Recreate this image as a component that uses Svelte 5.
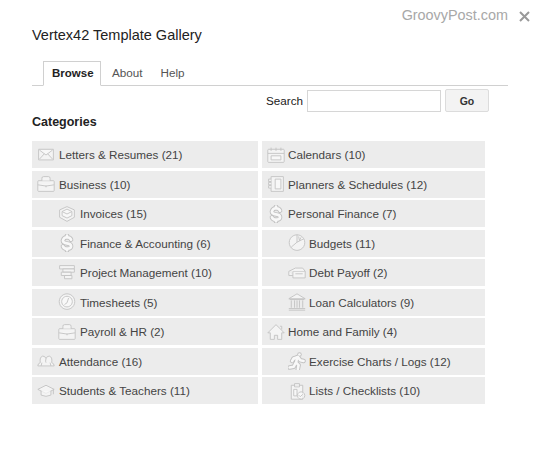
<script>
  const icons = {
    mail: ['M2 4h18v13H2z', 'M3 5l8 6 8-6', 'M3 16l6-6.500', 'M19 16l-6-6.500'],
    case: ['M1 8q0-1 1-1h18q1 0 1 1v11q0 1-1 1H2q-1 0-1-1z', 'M6 7V4q0-2 2-2h6q2 0 2 2v3', 'M1 12q10 3 20 0', 'M11 13v2'],
    box: ['M11 2l9 4v9l-9 5-9-5V6z', 'M5 8l6-3 6 3v5l-6 3-6-3z', 'M5 8l6 3 6-3'],
    project: ['M2 2h18v4H2z', 'M6 6h14v4H6z', 'M4 10h12v4H4z', 'M8 14h9v4H8z'],
    clock: ['M11 1a9.500 9.500 0 1 0 .01 0z', 'M11 4a6.500 6.500 0 1 0 .01 0z', 'M13 6l-2 6-3 2'],
    people: ['M1 17q0-3 3-4-1-7 3-8 3 0 4 3 1-3 4-3 4 1 3 8 3 1 3 4z', 'M11 8q-1 4 0 5', 'M6 13l-1 4', 'M16 13l1 4'],
    cap: ['M1 9l10-5 10 5-10 5z', 'M5 11v5q6 3 12 0v-5', 'M20 9v6'],
    cal: ['M1 5q0-1 1-1h18q1 0 1 1v14q0 1-1 1H2q-1 0-1-1z', 'M1 9h20', 'M5 2v4', 'M11 2v4', 'M17 2v4', 'M5 12h12v5H5z'],
    planner: ['M5 2h15v18H5z', 'M5 5H2v3h3', 'M5 9H2v3h3', 'M5 13H2v3h3', 'M10 5h7v12h-7z'],
    pie: ['M11 1a9.500 9.500 0 1 0 .01 0z', 'M11 10V1', 'M11 10l8-4', 'M11 10l-7 6', 'M13 3l1 5', 'M16 4l-2 4'],
    debt: ['M6 9h15v8H6z', 'M1 9l8-4h9l3 4', 'M1 9v5h5', 'M9 12h9'],
    bank: ['M11 1l10 6H1z', 'M2 8h18', 'M4 9v9', 'M8 9v9', 'M14 9v9', 'M18 9v9', 'M11 9v9', 'M1 19h20', 'M1 21h20'],
    home: ['M11 2L1 12h3v8h5v-5h4v5h5v-8h3z', 'M16 4h2v4'],
    list: ['M4 4h14v17H4z', 'M8 2h6v4H8z', 'M7 9h4v8H7z', 'M16 12a4.500 4.500 0 1 0 .01 0z', 'M13 16l2 2 3-3']
  }

  // these two are fat outlined shapes, drawn as a wide stroke with a paler one on top
  const fat = {
    dollar: ['M16 7q-1-3-5-3T6 8q0 3 5 3.500t5 3.500q0 3-5 3-4 0-5-3', 'M11 2v2', 'M11 18v2'],
    run: ['M14 3h.01', 'M7 8l5-2 3 4 4 1', 'M11 7l-1 6 3 3-1 5', 'M9 14l-2 4-5 1', 'M7 8l-2 3']
  }

  const left = [
    { name: 'Letters & Resumes (21)', icon: 'mail' },
    { name: 'Business (10)', icon: 'case' },
    { name: 'Invoices (15)', icon: 'box', sub: true },
    { name: 'Finance & Accounting (6)', icon: 'dollar', sub: true },
    { name: 'Project Management (10)', icon: 'project', sub: true },
    { name: 'Timesheets (5)', icon: 'clock', sub: true },
    { name: 'Payroll & HR (2)', icon: 'case', sub: true },
    { name: 'Attendance (16)', icon: 'people' },
    { name: 'Students & Teachers (11)', icon: 'cap' }
  ]
  const right = [
    { name: 'Calendars (10)', icon: 'cal' },
    { name: 'Planners & Schedules (12)', icon: 'planner' },
    { name: 'Personal Finance (7)', icon: 'dollar' },
    { name: 'Budgets (11)', icon: 'pie', sub: true },
    { name: 'Debt Payoff (2)', icon: 'debt', sub: true },
    { name: 'Loan Calculators (9)', icon: 'bank', sub: true },
    { name: 'Home and Family (4)', icon: 'home' },
    { name: 'Exercise Charts / Logs (12)', icon: 'run', sub: true },
    { name: 'Lists / Checklists (10)', icon: 'list', sub: true }
  ]
  const columns = [left, right]
</script>

<div class="dialog">
  <div class="watermark">
    <span>GroovyPost.com</span>
    <svg class="close" width="11" height="11" viewBox="0 0 11 11"><path d="M1 1l9 9M10 1l-9 9" /></svg>
  </div>

  <h1>Vertex42 Template Gallery</h1>

  <nav>
    <span class="tab active">Browse</span>
    <span class="tab">About</span>
    <span class="tab">Help</span>
  </nav>

  <div class="search">
    <label for="q">Search</label>
    <input id="q" type="text" />
    <button>Go</button>
  </div>

  <h2>Categories</h2>

  <div class="grid">
    {#each columns as col, c}
      <ul class:second={c === 1}>
        {#each col as item}
          <li class:sub={item.sub}>
            <svg width="18" height="18" viewBox="0 0 22 22">
              {#if fat[item.icon]}
                {#each fat[item.icon] as d}
                  <path class="under" {d} />
                {/each}
                {#each fat[item.icon] as d}
                  <path class="over" {d} />
                {/each}
              {:else}
                {#each icons[item.icon] as d}
                  <path {d} />
                {/each}
              {/if}
            </svg>
            <span>{item.name}</span>
          </li>
        {/each}
      </ul>
    {/each}
  </div>
</div>

<style>
  :global(body) {
    background: #fff;
  }
  .dialog {
    width: 539px;
    height: 450px;
    box-sizing: border-box;
    padding: 6px 9px 0 32px;
    font-family: "Liberation Sans", Arial, sans-serif;
    color: #333;
    overflow: hidden;
  }
  .watermark {
    display: flex;
    justify-content: flex-end;
    align-items: center;
    gap: 11px;
    height: 17px;
    font-size: 14.4px;
    color: #a8a8a8;
  }
  .close {
    margin-top: 4px;
  }
  .close path {
    fill: none;
    stroke: #999;
    stroke-width: 2;
  }
  h1 {
    margin: 1px 0 0;
    height: 22px;
    font-size: 14.5px;
    line-height: 22px;
    font-weight: normal;
    color: #222;
  }
  nav {
    display: flex;
    align-items: flex-end;
    box-sizing: border-box;
    width: 476px;
    height: 24px;
    margin-top: 16px;
    padding-left: 11px;
    border-bottom: 1px solid #d0d0d0;
    font-size: 11.7px;
  }
  .tab {
    height: 23px;
    line-height: 22px;
    padding: 0 9px;
    color: #555;
  }
  .tab.active {
    box-sizing: border-box;
    width: 58px;
    height: 25px;
    margin: 0 2px -1px 0;
    padding: 0 8px;
    line-height: 23px;
    background: #fff;
    border: 1px solid #d0d0d0;
    border-bottom-color: #fff;
    font-weight: bold;
    font-size: 11.5px;
    color: #222;
  }
  .search {
    display: flex;
    align-items: center;
    justify-content: flex-end;
    width: 457px;
    margin-top: 3px;
    height: 23px;
    font-size: 11.7px;
    color: #222;
  }
  label {
    margin-right: 4px;
  }
  input {
    box-sizing: border-box;
    width: 134px;
    height: 22px;
    margin: 0 4px 0 0;
    border: 1px solid #d6d6d6;
    background: #fff;
  }
  button {
    box-sizing: border-box;
    width: 44px;
    height: 23px;
    padding: 0;
    border: 1px solid #dcdcdc;
    border-radius: 2px;
    background: #f3f3f3;
    font: bold 10.500px "Liberation Sans", Arial, sans-serif;
    color: #333;
  }
  h2 {
    margin: 2px 0 0;
    font-size: 12.5px;
    line-height: 17px;
    color: #222;
  }
  .grid {
    display: flex;
    gap: 4px;
    margin-top: 10px;
  }
  ul {
    margin: 0;
    padding: 0;
    list-style: none;
    display: flex;
    flex-direction: column;
    gap: 2.5px;
    width: 226px;
  }
  ul.second {
    width: 223px;
  }
  li {
    display: flex;
    align-items: center;
    gap: 4px;
    height: 27px;
    padding-left: 5px;
    background: #ececec;
    font-size: 11.7px;
    color: #444;
    white-space: nowrap;
  }
  ul.second li {
    gap: 3px;
  }
  li.sub {
    padding-left: 26px;
  }
  li svg {
    flex: none;
    filter: blur(.3px);
  }
  li path {
    fill: #f8f8f8;
    fill-opacity: .7;
    stroke: #c2c2c2;
    stroke-width: 1.1;
    stroke-linejoin: round;
  }
  li path.under,
  li path.over {
    fill: none;
    stroke-linecap: round;
  }
  li path.under {
    stroke-width: 5.5;
  }
  li path.over {
    stroke: #f8f8f8;
    stroke-width: 3.2;
  }
</style>
